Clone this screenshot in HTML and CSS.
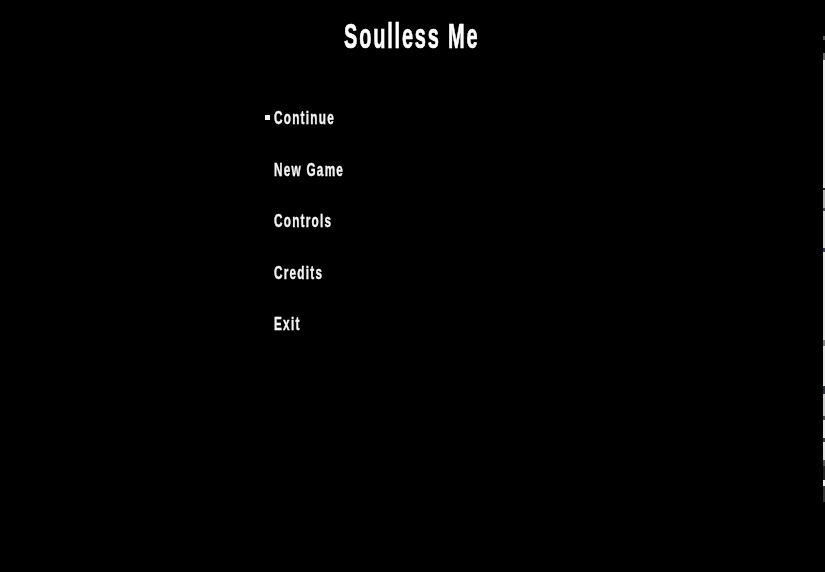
FILE: index.html
```html
<!DOCTYPE html>
<html lang="en">
<head>
<meta charset="utf-8">
<title>Soulless Me</title>
<link rel="stylesheet" href="styles.css">
</head>
<body>
<div class="screen">
  <main class="game">
    <h1 class="title"><span class="title-text">Soulless Me</span></h1>
    <nav class="menu">
      <a class="item selected"><span class="label">Continue</span></a>
      <a class="item"><span class="label">New Game</span></a>
      <a class="item"><span class="label">Controls</span></a>
      <a class="item"><span class="label">Credits</span></a>
      <a class="item"><span class="label">Exit</span></a>
    </nav>
  </main>
  <div class="edge"></div>
</div>
</body>
</html>
```
FILE: styles.css
```css
html, body {
  margin: 0;
  height: 100%;
  background: #000;
}
.screen {
  display: flex;
  width: 825px;
  height: 572px;
  overflow: hidden;
}
.game {
  flex: 1;
  display: flex;
  flex-direction: column;
  color: #f4f4f4;
  font-family: "Liberation Sans", sans-serif;
  font-weight: 700;
}
.title {
  margin: 0;
  padding: 17px 0 0 1px;
  text-align: center;
  font-size: 35px;
  line-height: 37px;
  font-weight: 700;
  letter-spacing: 3.2px;
  color: #fff;
}
.title-text {
  display: inline-block;
  transform: scaleX(0.57);
  filter: blur(0.4px);
  -webkit-text-stroke: 0.7px #fff;
}
.menu {
  display: flex;
  flex-direction: column;
  gap: 31px;
  padding: 54px 0 0 274px;
}
.item {
  position: relative;
  display: block;
  font-size: 19px;
  line-height: 20.5px;
  letter-spacing: 2px;
}
.label {
  display: inline-block;
  transform: scaleX(0.62);
  transform-origin: left center;
  filter: blur(0.4px);
  -webkit-text-stroke: 0.4px #f4f4f4;
}
.selected::before {
  content: "";
  position: absolute;
  left: -9px;
  top: 7px;
  width: 5px;
  height: 5px;
  background: #f4f4f4;
}
.edge {
  flex: 0 0 2px;
  margin-top: 36px;
  height: 466px;
  background: linear-gradient(
    to bottom,
    #555 0 4px,
    #000 4px 17px,
    #666 17px 24px,
    #e8e8e8 24px 152px,
    #333 152px 154px,
    #bbb 154px 172px,
    #556 172px 175px,
    #ddd 175px 212px,
    #446 212px 216px,
    #e8e8e8 216px 304px,
    #888 304px 310px,
    #e8e8e8 310px 350px,
    #334 350px 358px,
    #ccc 358px 380px,
    #555 380px 384px,
    #e8e8e8 384px 402px,
    #444 402px 406px,
    #e0e0e0 406px 424px,
    #555 424px 430px,
    #222 430px 444px,
    #eee 444px 450px,
    #333 450px 466px
  );
}
```
